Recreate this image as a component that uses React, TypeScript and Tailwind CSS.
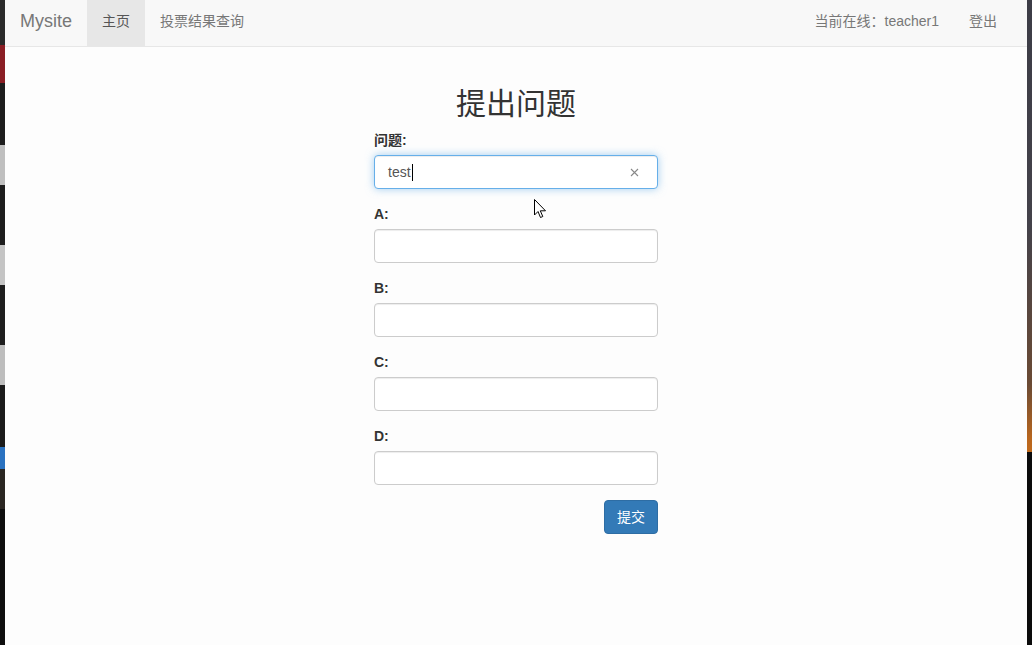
import React from "react";

const font = { fontFamily: '"Liberation Sans", "Noto Sans CJK SC", Arial, sans-serif' };

function Field({ label, children }: { label: string; children?: React.ReactNode }) {
  return (
    <div className="mb-[15px]">
      <div className="mb-[5px] text-[14px] font-bold leading-[20px] text-[#333]">{label}</div>
      {children ?? (
        <div className="h-[34px] w-full rounded-[4px] border border-[#ccc] bg-white shadow-[inset_0_1px_1px_rgba(0,0,0,0.075)]" />
      )}
    </div>
  );
}

export default function App() {
  return (
    <div className="relative flex h-[645px] w-[1032px] overflow-hidden" style={font}>
      {/* left desktop strip */}
      <div className="flex w-[5px] flex-col bg-[#151515]">
        <div className="h-[45px] bg-[#2a2a2a]" />
        <div className="h-[38px] bg-[#8a1e24]" />
        <div className="h-[62px] bg-[#1d1d1d]" />
        <div className="h-[40px] bg-[#bfbfbf]" />
        <div className="h-[60px] bg-[#1d1d1d]" />
        <div className="h-[40px] bg-[#c4c4c4]" />
        <div className="h-[60px] bg-[#1e1e1e]" />
        <div className="h-[40px] bg-[#bdbdbd]" />
        <div className="h-[62px] bg-[#1b1b1b]" />
        <div className="h-[22px] bg-[#2a72c0]" />
        <div className="h-[40px] bg-[#2a2622]" />
        <div className="flex-1 bg-[#0e0e0e]" />
      </div>

      {/* main page */}
      <div className="flex flex-1 flex-col bg-[#fdfdfd]">
        <nav className="flex h-[47px] items-stretch justify-between border-b border-[#e7e7e7] bg-[#f8f8f8] pr-[15px] text-[14px] text-[#777]">
          <div className="flex items-stretch">
            <div className="flex items-center px-[15px] pb-[4px] text-[18px]">Mysite</div>
            <div className="flex items-center bg-[#e7e7e7] px-[15px] pb-[4px] text-[#555]">主页</div>
            <div className="flex items-center px-[15px] pb-[4px]">投票结果查询</div>
          </div>
          <div className="flex items-stretch">
            <div className="flex items-center px-[15px] pb-[4px]">当前在线：teacher1</div>
            <div className="flex items-center px-[15px] pb-[4px]">登出</div>
          </div>
        </nav>

        <div className="mx-auto w-[284px]">
          <h1 className="mt-[37px] mb-[6px] text-center text-[30px] font-normal leading-[40px] text-[#333]">提出问题</h1>
          <Field label="问题:">
            <div className="relative flex h-[34px] w-full items-center rounded-[4px] border border-[#66afe9] bg-white pl-[13px] shadow-[inset_0_1px_1px_rgba(0,0,0,0.075),0_0_8px_rgba(102,175,233,0.6)]">
              <span className="text-[14px] text-[#555]">test</span>
              <span className="ml-[1px] h-[17px] w-[1px] bg-black" />
              <svg className="absolute right-[18px] top-[12px]" width="9" height="9" viewBox="0 0 9 9">
                <path d="M1 1 L8 8 M8 1 L1 8" stroke="#888" strokeWidth="1.1" />
              </svg>
            </div>
          </Field>
          <Field label="A:" />
          <Field label="B:" />
          <Field label="C:" />
          <Field label="D:" />
          <div className="mt-[1px] flex justify-end">
            <div className="flex h-[34px] items-center rounded-[4px] border border-[#2e6da4] bg-[#337ab7] px-[12px] text-[14px] text-white">
              提交
            </div>
          </div>
        </div>
      </div>

      {/* right desktop strip */}
      <div className="flex w-[5px] flex-col">
        <div className="h-[452px] bg-[linear-gradient(to_bottom,#3c3c46_0%,#44424a_50%,#6a4a34_85%,#b8661e_97%,#c06a1c_100%)]" />
        <div className="flex-1 bg-[#0c0c0c]" />
      </div>

      {/* mouse cursor */}
      <svg className="absolute left-[534px] top-[199px]" width="13" height="20" viewBox="0 0 13 20">
        <path d="M0.5 0.5 L0.5 16 L4 12.5 L6.5 18.5 L8.8 17.5 L6.3 11.8 L11.5 11.8 Z" fill="#fff" stroke="#000" strokeWidth="1" strokeLinejoin="round" />
      </svg>
    </div>
  );
}
